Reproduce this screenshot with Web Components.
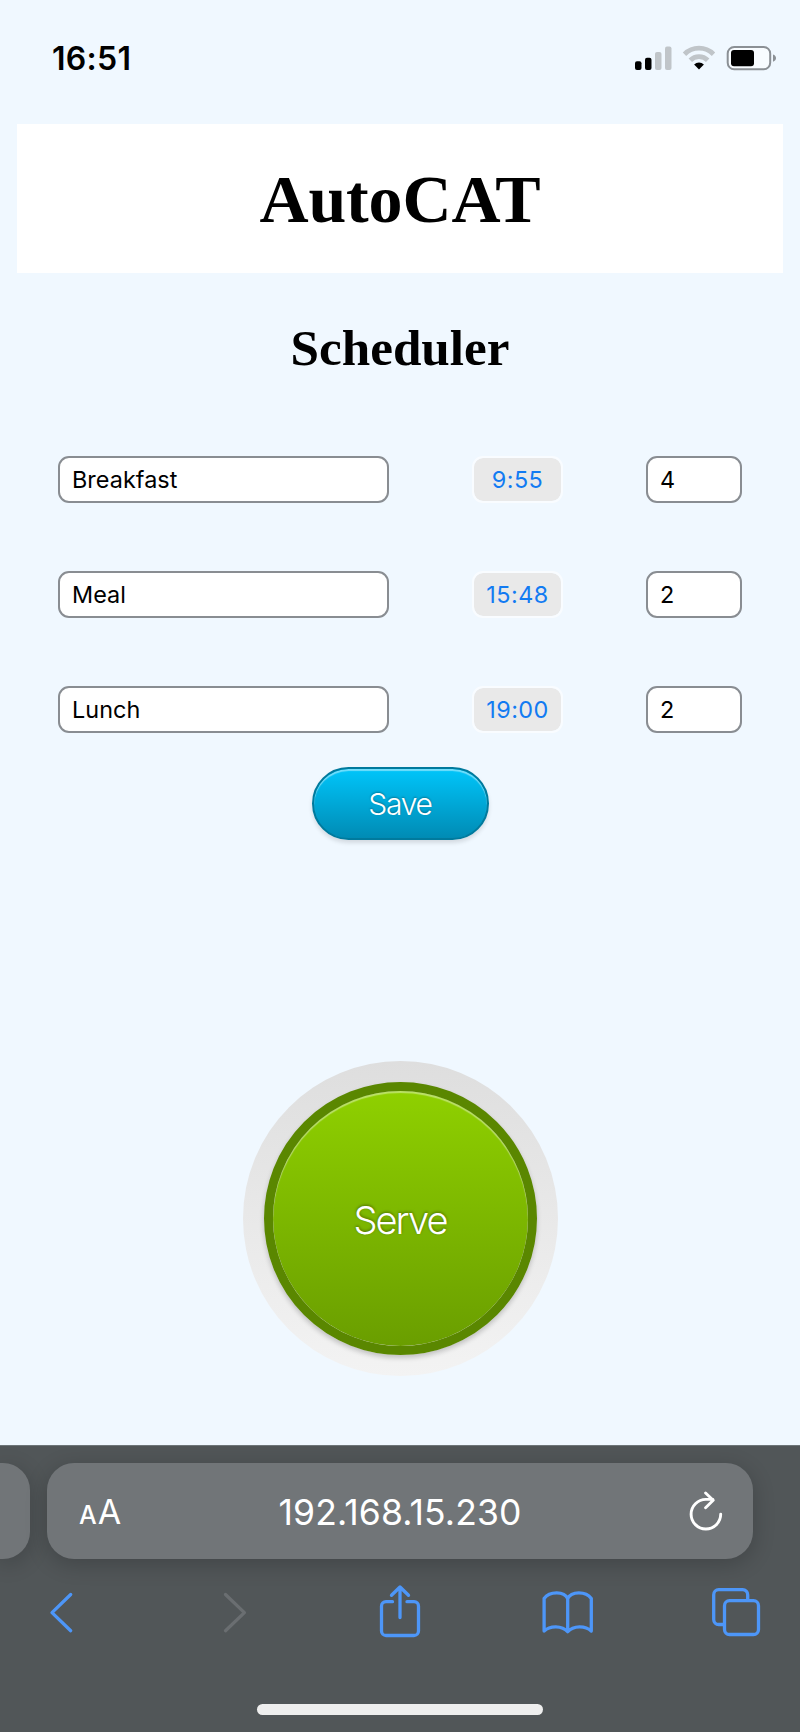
<!DOCTYPE html>
<html lang="en">
<head>
<meta charset="utf-8">
<title>AutoCAT</title>
<style>
html,body{margin:0;padding:0}
body{width:800px;height:1732px;overflow:hidden;background:#f0f8ff;font-family:Inter,"Liberation Sans",sans-serif;color:#000}
</style>
</head>
<body>
<phone-screen>
  <status-bar slot="status">16:51</status-bar>
  <page-title>AutoCAT</page-title>
  <section-title>Scheduler</section-title>
  <meal-list>
    <meal-row><span slot="name">Breakfast</span><span slot="time">9:55</span><span slot="count">4</span></meal-row>
    <meal-row><span slot="name">Meal</span><span slot="time">15:48</span><span slot="count">2</span></meal-row>
    <meal-row><span slot="name">Lunch</span><span slot="time">19:00</span><span slot="count">2</span></meal-row>
  </meal-list>
  <save-button>Save</save-button>
  <serve-button>Serve</serve-button>
  <browser-chrome slot="chrome">192.168.15.230</browser-chrome>
</phone-screen>
<script>
const define = (name, html) => {
  const t = document.createElement('template');
  t.innerHTML = html;
  customElements.define(name, class extends HTMLElement {
    constructor() {
      super();
      this.attachShadow({mode: 'open'}).append(t.content.cloneNode(true));
    }
  });
};

define('phone-screen', `<style>
:host{display:flex;flex-direction:column;width:800px;height:1732px;overflow:hidden}
main{flex:1;min-height:0;display:flex;flex-direction:column;align-items:center}
</style><slot name="status"></slot><main><slot></slot></main><slot name="chrome"></slot>`);

define('status-bar', `<style>
:host{display:flex;height:124px;box-sizing:border-box;padding:38px 23px 0 52px;justify-content:space-between;align-items:flex-start}
.t{font-size:32px;line-height:41px;font-weight:600;letter-spacing:.3px}
svg{display:block}
</style><span class="t"><slot></slot></span>
<svg width="145" height="40" viewBox="632 38 145 40">
<rect x="635" y="61.300" width="6.500" height="8.700" rx="2"/><rect x="645" y="57.700" width="6.500" height="12.300" rx="2"/>
<g fill="#c0c5c9"><rect x="655" y="52" width="6.500" height="18" rx="2"/><rect x="665" y="46.500" width="6.500" height="23.500" rx="2"/></g>
<g fill="none" stroke="#c0c5c9" stroke-width="4.800"><path d="M684.500 54.200a20.500 20.500 0 0 1 29 0"/><path d="M690.300 60.200a12.200 12.200 0 0 1 17.400 0"/></g>
<path d="M699 69.600l-4.900-5a7 7 0 0 1 9.800 0z"/>
<rect x="727.700" y="47" width="42.500" height="22.300" rx="6.500" fill="#f8fcff" stroke="#8b9095" stroke-width="2"/>
<rect x="731" y="50" width="23" height="16.200" rx="3"/>
<path d="M773 54.500q3 1 3 3.600t-3 3.600z" fill="#8b9095"/>
</svg>`);

define('page-title', `<style>
:host{display:block;width:766px;height:149px;background:#fff;flex:none;text-align:center;font:bold 68px/151px "Liberation Serif",serif;letter-spacing:-.15px}
h1{margin:0;font:inherit}
</style><h1><slot></slot></h1>`);

define('section-title', `<style>
:host{display:block;flex:none;margin-top:45px;height:60px;font:bold 51.200px/60px "Liberation Serif",serif}
h2{margin:0;font:inherit}
</style><h2><slot></slot></h2>`);

define('meal-list', `<style>
:host{display:grid;grid-auto-rows:47px;row-gap:68.200px;width:684px;margin-top:78px;flex:none}
</style><slot></slot>`);

define('meal-row', `<style>
:host{display:grid;grid-template-columns:331px 91px 96px;column-gap:83px;height:47px;font-size:23.400px;line-height:43px}
.f,.d{box-sizing:border-box;height:47px}
.f{border:2px solid #898d92;border-radius:11px;background:#fff;padding-left:12px;letter-spacing:.05px}
.d{border:2px solid #f9fcff;border-radius:11px;background:#e9e9e9;background-clip:padding-box;color:#127bf2;text-align:center;line-height:44px;letter-spacing:.45px}
</style><div class="f"><slot name="name"></slot></div><div class="d"><slot name="time"></slot></div><div class="f"><slot name="count"></slot></div>`);

define('save-button', `<style>
:host{display:block;flex:none;margin-top:34px}
button{display:block;box-sizing:border-box;width:177px;height:73px;padding:0;border:2px solid #007a9d;border-radius:37px;
background:linear-gradient(#00c5fa,#008bb4);box-shadow:inset 0 2px 1px rgba(255,255,255,.45),0 3px 4px rgba(0,0,0,.12);
color:#fff;font:300 30px/70px Inter,sans-serif;letter-spacing:-1.250px;text-shadow:0 -1px 2px rgba(0,0,0,.3)}
</style><button><slot></slot></button>`);

define('serve-button', `<style>
:host{display:block;flex:none;margin-top:221px;padding:21px;border-radius:50%;background:linear-gradient(#dedede,#f3f3f3)}
button{display:block;box-sizing:border-box;width:273px;height:273px;padding:0;border:9px solid #5a8700;border-radius:50%;
background:linear-gradient(#8fd000,#6a9e00) padding-box;box-shadow:inset 0 2px 1px rgba(255,255,255,.4),0 3px 5px rgba(0,0,0,.2);
color:#fff;font:300 38px/259px Inter,sans-serif;letter-spacing:-1.900px;text-shadow:0 -1px 3px rgba(0,0,0,.4)}
</style><button><slot></slot></button>`);

define('browser-chrome', `<style>
:host{display:flex;flex-direction:column;align-items:center;flex:none;height:287px;box-sizing:border-box;background:#515658;border-top:1px solid #6d7578;overflow:hidden}
.tabs{display:flex;gap:17px;width:800px;margin-top:17px}
.tab{height:96px;background:#717578;box-shadow:0 5px 22px rgba(0,0,0,.2);border-radius:27px}
.prev{width:30px;border-radius:0 27px 27px 0}
.cur{width:706px;display:grid;grid-template-columns:200px 1fr 200px;align-items:center;color:#fff}
.aa{padding-left:32px;line-height:1;font-size:34px;display:flex;align-items:baseline;gap:1px}
.aa small{font-size:25px;font-weight:500}
.url{font-size:35.500px;line-height:100px;height:98px;text-align:center;letter-spacing:.12px}
.cur svg{justify-self:end;margin-right:24px}
nav{display:flex;width:800px;height:60px;margin-top:23px;fill:none;stroke:#4d96f8;stroke-width:3.300;stroke-linecap:round;stroke-linejoin:round}
nav svg{display:block;flex:none}
.home{width:286px;height:11px;margin-top:62px;border-radius:6px;background:#eee}
</style>
<div class="tabs"><div class="tab prev"></div><div class="tab cur">
<div class="aa"><small>A</small><span>A</span></div><div class="url"><slot></slot></div>
<svg width="46" height="50" viewBox="683 1486 46 50" fill="none" stroke="#fff" stroke-width="2.900" stroke-linecap="round" stroke-linejoin="round"><path d="M720.700 1513.300a14.800 14.800 0 1 1-14.800-14.900h7M705.600 1492l7.600 7.300-7.600 7.400"/></svg>
</div></div>
<nav>
<svg style="margin-left:46px" width="28" height="60" viewBox="46 1582 28 60"><path d="M70.700 1594.500l-18.700 18.100 18.700 18.100"/></svg>
<svg style="margin-left:148px" width="28" height="60" viewBox="222 1582 28 60" stroke="#6a6e71"><path d="M225.500 1594.500l18.900 18.100-18.900 18.100"/></svg>
<svg style="margin-left:128px" width="44" height="60" viewBox="378 1582 44 60"><path d="M392.500 1601.700h-6.500a4.500 4.500 0 0 0-4.500 4.500v24.800a4.500 4.500 0 0 0 4.500 4.500h28a4.500 4.500 0 0 0 4.500-4.500v-24.800a4.500 4.500 0 0 0-4.500-4.500h-7M400 1617.500v-29.500M391.500 1595.300l8.500-8.300 8.500 8.300"/></svg>
<svg style="margin-left:119px" width="54" height="60" viewBox="541 1582 54 60"><path d="M567.700 1598.500c-3.500-7.500-18-7.700-23.600 0v32.500c5.500-5.500 18-6 23.600.8c5.600-6.800 18-6.300 23.600-.8v-32.500c-5.600-7.700-20-7.500-23.600 0v32.500"/></svg>
<svg style="margin-left:115px" width="52" height="60" viewBox="710 1582 52 60"><path d="M723.500 1624.500h-4.800a5 5 0 0 1-5-5v-24.800a5 5 0 0 1 5-5h24a5 5 0 0 1 5 5v5.500"/><rect x="724.500" y="1600.700" width="34" height="33.800" rx="5"/></svg>
</nav>
<div class="home"></div>`);
</script>
</body>
</html>
